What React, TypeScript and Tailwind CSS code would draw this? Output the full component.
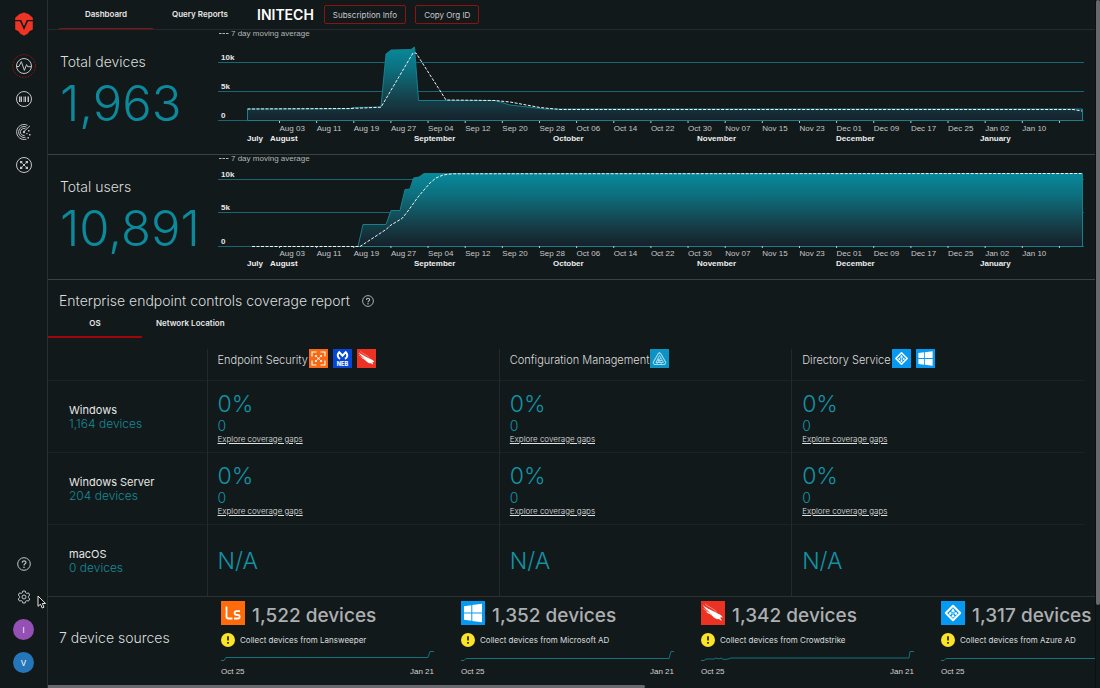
import React from "react";

type Point = [number, number];

const TICKS = [
  "Aug 03", "Aug 11", "Aug 19", "Aug 27", "Sep 04", "Sep 12", "Sep 20", "Sep 28",
  "Oct 06", "Oct 14", "Oct 22", "Oct 30", "Nov 07", "Nov 15", "Nov 23", "Dec 01",
  "Dec 09", "Dec 17", "Dec 25", "Jan 02", "Jan 10", "",
];

const MONTHS: [string, number][] = [
  ["July", 29], ["August", 52], ["September", 196], ["October", 335],
  ["November", 479], ["December", 618], ["January", 762],
];

const toPoints = (points: Point[]) => points.map((p) => p.join(",")).join(" ");

interface ChartProps {
  id: string;
  label: string;
  grid: [string, number][];
  area: Point[];
  average: Point[];
  top: number;
}

function Chart({ id, label, grid, area, average, top }: ChartProps) {
  return (
    <svg viewBox="0 0 877 124" className="block h-auto w-full min-w-0 flex-1 font-['Liberation_Sans',Arial,sans-serif]" role="img" aria-label={label}>
      <defs>
        <linearGradient id={id} gradientUnits="userSpaceOnUse" x1="0" x2="0" y1={top} y2="91">
          <stop offset="0" stopColor="#078a9c" />
          <stop offset="0.3" stopColor="#0d6f7e" />
          <stop offset="0.7" stopColor="#15404a" />
          <stop offset="1" stopColor="#16212a" />
        </linearGradient>
      </defs>
      {grid.map(([text, y]) => (
        <g key={text}>
          <line x1="0" x2="866" y1={y + 0.5} y2={y + 0.5} stroke="#196573" />
          <text x="3" y={y - 2} fontSize="8" fontWeight="700" fill="#e6e7e8">{text}</text>
        </g>
      ))}
      <polygon points={toPoints(area)} fill={`url(#${id})`} stroke="#16808d" />
      <polyline points={toPoints(average)} fill="none" stroke="#f1f1f1" strokeDasharray="3 1.5" />
      <path d="M1 3.5h2.5M4.5 3.5H7M8 3.5h2.5" stroke="#b4b6b8" />
      <text x="13" y="6" fontSize="8" fill="#b4b6b8">7 day moving average</text>
      {TICKS.map((text, i) => {
        const x = 61.5 + i * 37.14;
        return (
          <g key={i}>
            <line x1={x} x2={x} y1="91" y2="93" stroke="#c5c7c9" />
            <text x={x} y="101" fontSize="8" fill="#c5c7c9">{text}</text>
          </g>
        );
      })}
      {MONTHS.map(([text, x]) => (
        <text key={text} x={x} y="111" fontSize="8" fontWeight="700" fill="#ededee">{text}</text>
      ))}
    </svg>
  );
}

function MetricRow({ title, value, ...chart }: Omit<ChartProps, "label"> & { title: string; value: string }) {
  return (
    <section className="flex border-b border-[#3c4142]">
      <div className="w-[170px] shrink-0 pt-5 pl-3">
        <h2 className="text-[14px] leading-6 font-light text-[#dcddde]">{title}</h2>
        <p className="text-[49px] leading-[60px] font-light text-[#0c8a9c]">{value}</p>
      </div>
      <Chart label={`${title} over time`} {...chart} />
    </section>
  );
}

function BrandMark() {
  return (
    <svg viewBox="0 0 20 24" className="h-6 w-5" aria-hidden="true">
      <path d="M10 0.5 14.5 2 18.6 5.6 19 8H12.8L10 14.2 7.2 8H1L1.4 5.6 5.5 2Z" fill="#ee3424" />
      <path d="M1.2 9.3H6L10 18 14 9.3H18.8V17.5L15.2 19.5 14 21.5 10 23.8 6 21.5 4.8 19.5 1.2 17.5Z" fill="#ee3424" />
    </svg>
  );
}

const line = { fill: "none", stroke: "#c3c5c7", strokeWidth: 1 };

function PulseIcon() {
  return (
    <svg viewBox="0 0 24 24" className="size-6" aria-hidden="true">
      <circle cx="12" cy="12" r="11.4" fill="none" stroke="#8c1414" strokeDasharray="2 1" />
      <circle cx="12" cy="12" r="7.5" {...line} />
      <path d="M4.5 12.5H7L9.3 7.6 12.4 16.4 14.6 10.6 15.7 12.7H19.5" {...line} />
    </svg>
  );
}

function BarcodeIcon() {
  return (
    <svg viewBox="0 0 24 24" className="size-6" aria-hidden="true">
      <circle cx="12" cy="12" r="7.5" {...line} />
      <path d="M7.5 9.5v5.5M9.5 9.5v5.5M13.5 9.5v5.5M16.5 9.5v5.5" {...line} />
      <path d="M8.5 9.5v5.5M11.5 9.5v5.5M12.5 9.5v5.5M15.5 9.5v5.5" {...line} strokeOpacity="0.5" />
    </svg>
  );
}

function RadarIcon() {
  return (
    <svg viewBox="0 0 24 24" className="size-6" aria-hidden="true">
      <path d="M15.5 5.3A7.5 7.5 0 1 0 14.5 19.1" {...line} />
      <path d="M14.6 7.1A5.5 5.5 0 1 0 13.5 17.3" {...line} />
      <path d="M13.5 8.9A3.5 3.5 0 1 0 12.6 15.4" {...line} />
      <path d="M11.5 12 18 5.8" {...line} />
      <circle cx="12" cy="12" r="1.2" fill="#c3c5c7" />
      <path d="M16 10h1.5v1.5H16ZM14.3 13h1.2v1.2h-1.2ZM17 14h1.5v1.5H17ZM15.5 17H17v1.5h-1.5Z" fill="#c3c5c7" />
    </svg>
  );
}

function NodesIcon() {
  return (
    <svg viewBox="0 0 24 24" className="size-6" aria-hidden="true">
      <circle cx="12" cy="12" r="7.5" {...line} />
      <path d="M8.5 8.5 15.5 15.5M15.5 8.5 8.5 15.5" {...line} strokeOpacity="0.6" />
      <path d="M8 8h2.300v2.300H8ZM13.700 8H16v2.300h-2.300ZM8 13.700h2.300V16H8ZM13.700 13.700H16V16h-2.300ZM11 11h2v2h-2Z" fill="#c3c5c7" />
    </svg>
  );
}

function HelpIcon({ className }: { className: string }) {
  return (
    <svg viewBox="0 0 14 14" className={className} aria-hidden="true">
      <circle cx="7" cy="7" r="6.3" {...line} />
      <path d="M5.2 5.7C5.2 3.2 8.9 3.3 8.9 5.5 8.9 6.9 7 6.8 7 8.5" {...line} strokeWidth="1.2" />
      <circle cx="7" cy="10.2" r="0.8" fill="#c3c5c7" />
    </svg>
  );
}

function GearIcon() {
  return (
    <svg viewBox="0 0 14 14" className="size-[14px]" aria-hidden="true">
      <path d="M5.8 1h2.4l.4 1.7 1.2.7 1.7-.5 1.2 2.1-1.2 1.3v1.4l1.2 1.3-1.2 2.1-1.7-.5-1.2.7-.4 1.7H5.8l-.4-1.7-1.2-.7-1.7.5L1.3 9l1.2-1.3V6.3L1.3 5l1.2-2.1 1.7.5 1.2-.7Z" {...line} strokeLinejoin="round" />
      <circle cx="7" cy="7" r="2" {...line} />
    </svg>
  );
}

type Logo = "scan" | "neb" | "falcon" | "triangle" | "azure" | "windows" | "ls";

const LOGO_NAMES: Record<Logo, string> = {
  scan: "Endpoint scanner",
  neb: "Malwarebytes Nebula",
  falcon: "Crowdstrike",
  triangle: "Configuration manager",
  azure: "Azure AD",
  windows: "Microsoft AD",
  ls: "Lansweeper",
};

function VendorLogo({ logo, className }: { logo: Logo; className: string }) {
  return (
    <svg viewBox="0 0 24 24" className={className} role="img" aria-label={LOGO_NAMES[logo]}>
      {logo === "scan" && (
        <>
          <path d="M0 0h24v24H0Z" fill="#fb6a12" />
          <path d="M9.500 3.800H3.800v5.700M14.500 3.800h5.700v5.700M9.500 20.200H3.800v-5.700M14.500 20.200h5.700v-5.700" fill="none" stroke="#fff" strokeWidth="1.4" />
          <path d="M8.5 8.5l7 7M15.5 8.5l-7 7" stroke="#fff" strokeWidth="1" />
          <path d="M7.500 7.500h2.200v2.200H7.500ZM14.300 7.500h2.200v2.200h-2.200ZM7.500 14.300h2.200v2.200H7.500ZM14.300 14.300h2.200v2.200h-2.200ZM11 11h2v2h-2Z" fill="#fff" />
        </>
      )}
      {logo === "neb" && (
        <>
          <path d="M0 0h24v24H0Z" fill="#0647d6" />
          <path d="M9 12.400C5.200 11 5.200 6.200 7.800 4L12 8.600 16.200 4C18.800 6.200 18.800 11 15 12.400" fill="none" stroke="#fff" strokeWidth="2.600" strokeLinejoin="miter" />
          <text x="12" y="22" textAnchor="middle" fontSize="7" fontWeight="800" fill="#fff">NEB</text>
        </>
      )}
      {logo === "falcon" && (
        <>
          <path d="M0 0h24v24H0Z" fill="#ec3323" />
          <path d="M2 4C6 8 12 9.5 15.5 12 18 13 20 13.5 22 16.5 20.5 16 19.5 16.5 19 17 20 17.5 20.5 18.5 20.5 20 19 18 17.5 18.3 16 18 13 17.5 12 15 9.5 13.5 8 12.6 6 12 5 10.5 6.5 11 8 11 9 11.5 7 9.5 3.5 8 2 4Z" fill="#fff" />
          <path d="M4 3C8 6.5 13 7.5 16 11.5M2.5 7.5C5 10.5 9 11 11 14" fill="none" stroke="#f6b9a9" strokeWidth="0.7" />
        </>
      )}
      {logo === "triangle" && (
        <>
          <path d="M0 0h24v24H0Z" fill="#0b93c4" />
          <path d="M12 4.5 14 6.5 20 17 18.5 19.5H5.5L4 17 10 6.5Z" fill="none" stroke="#a5dcee" strokeWidth="1.3" />
          <path d="M12 8 17 17H7.5L12 8M10 12 14.5 19M13.5 11 8.5 19M9 14.5h6" fill="none" stroke="#a5dcee" strokeWidth="1.2" />
        </>
      )}
      {logo === "azure" && (
        <>
          <path d="M0 0h24v24H0Z" fill="#0699f2" />
          <path d="M12 4.8 19.2 12 12 19.2 4.8 12Z" fill="none" stroke="#fff" strokeWidth="2" strokeLinejoin="round" />
          <path d="M12 7.5V16M12 9 9 12.5M12 9l3 3.5" stroke="#d8efff" strokeWidth="0.9" />
          <circle cx="12" cy="9.5" r="1.3" fill="#fff" />
          <circle cx="9.2" cy="12.6" r="1.3" fill="#fff" />
          <circle cx="14.8" cy="12.6" r="1.3" fill="#fff" />
          <circle cx="12" cy="15.2" r="1.3" fill="#fff" />
        </>
      )}
      {logo === "windows" && (
        <>
          <path d="M0 0h24v24H0Z" fill="#0699f2" />
          <path d="M3 5.2 10.3 4.2V11.4H3ZM11.3 4 21 2.7V11.4H11.3ZM3 12.5H10.3V19.8L3 18.8ZM11.3 12.5H21V21.3L11.3 20Z" fill="#fff" />
        </>
      )}
      {logo === "ls" && (
        <>
          <path d="M0 0h24v24H0Z" fill="#ff6a0a" />
          <path d="M5.5 5.5V15.5Q5.5 17.5 7.5 17.5H11.5M19 10.2H15.5C13 10.2 13 13.6 15.5 13.8H16.8C19.3 14 19.3 17.5 16.8 17.5H13" fill="none" stroke="#fff" strokeWidth="1.8" />
        </>
      )}
    </svg>
  );
}

const COVERAGE_COLUMNS: { name: string; logos: Logo[] }[] = [
  { name: "Endpoint Security", logos: ["scan", "neb", "falcon"] },
  { name: "Configuration Management", logos: ["triangle"] },
  { name: "Directory Service", logos: ["azure", "windows"] },
];

const COVERAGE_ROWS = [
  { os: "Windows", devices: "1,164 devices", covered: true },
  { os: "Windows Server", devices: "204 devices", covered: true },
  { os: "macOS", devices: "0 devices", covered: false },
];

const SOURCES: { logo: Logo; count: string; source: string; trend: string }[] = [
  { logo: "ls", count: "1,522", source: "Lansweeper", trend: "0,10.5 3,10.5 5,7.5 207,7.5 209,1.5 213,1.5" },
  { logo: "windows", count: "1,352", source: "Microsoft AD", trend: "0,10.5 3,10.5 5,8.5 208,8.5 210,1.5 213,1.5" },
  { logo: "falcon", count: "1,342", source: "Crowdstrike", trend: "0,10.5 3,10.5 5,9 13,9 15,8 18,9 20,8 23,9.5 27,9 30,8 208,8 209,1.5 213,1.5" },
  { logo: "azure", count: "1,317", source: "Azure AD", trend: "0,10.5 3,10.5 5,8.5 208,8.5 210,1.5 213,1.5" },
];

function Sidebar() {
  return (
    <nav aria-label="Main" className="sticky top-0 flex h-screen w-12 shrink-0 flex-col items-center justify-between border-r border-[#2b3031] pb-[9px]">
      <div className="flex flex-col items-center">
        <a href="#home" aria-label="Home" className="flex h-[49px] items-start pt-3"><BrandMark /></a>
        <a href="#activity" aria-label="Activity" className="flex h-[33px] items-center"><PulseIcon /></a>
        <a href="#devices" aria-label="Devices" className="flex h-[33px] items-center"><BarcodeIcon /></a>
        <a href="#discovery" aria-label="Discovery" className="flex h-[33px] items-center"><RadarIcon /></a>
        <a href="#network" aria-label="Network" className="flex h-[33px] items-center"><NodesIcon /></a>
      </div>
      <div className="flex flex-col items-center">
        <button aria-label="Help" className="flex h-[33px] items-center"><HelpIcon className="size-[14px]" /></button>
        <button aria-label="Settings" className="flex h-[33px] items-center"><GearIcon /></button>
        <div className="flex h-[33px] items-center">
          <button className="size-[21px] rounded-full bg-[#9450b4] text-[8px] text-white">I</button>
        </div>
        <div className="flex h-[33px] items-center">
          <button className="size-[21px] rounded-full bg-[#2576b8] text-[8px] text-white">V</button>
        </div>
      </div>
    </nav>
  );
}

function CoverageTable() {
  return (
    <table className="mt-[11px] w-full table-fixed border-collapse text-left">
      <thead>
        <tr className="h-[31px] align-top">
          <td className="w-[159px]" />
          {COVERAGE_COLUMNS.map((column) => (
            <th key={column.name} scope="col" className="border-l border-[#24292a] p-0 pl-[10px] font-normal">
              <div className="flex items-start gap-[5px]">
                <span className="-mr-1 pt-px text-[11px] leading-5 font-light text-[#dcddde]">{column.name}</span>
                {column.logos.map((logo) => (
                  <VendorLogo key={logo} logo={logo} className="size-[19px]" />
                ))}
              </div>
            </th>
          ))}
        </tr>
      </thead>
      <tbody>
        {COVERAGE_ROWS.map((row) => (
          <tr key={row.os} className="h-[72px] border-t border-[#1d2324]">
            <th scope="row" className="p-0 pt-0.5 pl-[21px] font-normal">
              <div className="text-[11px] leading-[14px] text-[#e6e7e8]">{row.os}</div>
              <div className="text-[12px] leading-[14px] font-light text-[#178a99]">{row.devices}</div>
            </th>
            {COVERAGE_COLUMNS.map((column) => (
              <td key={column.name} className="border-l border-[#24292a] p-0 pt-0.5 pl-[10px] font-light text-[#1492a4]">
                <div className="text-[23px] leading-7">{row.covered ? "0%" : "N/A"}</div>
                {row.covered && (
                  <>
                    <div className="text-[14px] leading-4">0</div>
                    <a href="#gaps" className="block text-[8px] leading-[11px] text-[#e0e1e2] underline">Explore coverage gaps</a>
                  </>
                )}
              </td>
            ))}
          </tr>
        ))}
      </tbody>
    </table>
  );
}

function SourceCard({ logo, count, source, trend }: (typeof SOURCES)[number]) {
  return (
    <article className="w-[213px] shrink-0">
      <div className="flex items-start gap-[7px]">
        <VendorLogo logo={logo} className="size-6" />
        <h3 className="pt-px text-[19px] leading-7 font-medium whitespace-nowrap text-[#adafb1]">{count} devices</h3>
      </div>
      <div className="mt-[3px] flex items-center gap-[5px]">
        <svg viewBox="0 0 14 14" className="size-[14px]" role="img" aria-label="Warning">
          <circle cx="7" cy="7" r="7" fill="#fbe428" />
          <path d="M7 3.2v4.3M7 9v1.7" stroke="#20230f" strokeWidth="1.7" />
        </svg>
        <p className="text-[8px] leading-[14px] text-[#dcddde]">Collect devices from {source}</p>
      </div>
      <svg viewBox="0 0 213 12" className="mt-[3px] block w-full" role="img" aria-label={`${source} trend`}>
        <polyline points={trend} fill="none" stroke="#14727e" />
      </svg>
      <div className="mt-[5px] flex justify-between font-['Liberation_Sans',Arial,sans-serif] text-[8px] leading-[10px] text-[#d2d3d4]">
        <span>Oct 25</span>
        <span>Jan 21</span>
      </div>
    </article>
  );
}

export default function App() {
  return (
    <div className="flex min-h-screen bg-[#12191a] font-['Inter','Noto_Sans',sans-serif] text-[#e6e7e8]">
      <Sidebar />
      <div className="flex min-w-0 flex-1 flex-col">
        <header className="flex h-[30px] items-center border-b border-[#252b2c] pl-[11px]">
          <nav aria-label="Views" className="flex h-full text-[8px] font-semibold">
            <a href="#dashboard" aria-current="page" className="flex w-[94px] items-center justify-center border-b border-[#8f0f12]">Dashboard</a>
            <a href="#reports" className="flex w-[94px] items-center justify-center border-b border-transparent">Query Reports</a>
          </nav>
          <h1 className="ml-[10px] text-[14px] font-semibold text-white">INITECH</h1>
          <button className="ml-[10px] h-[19px] rounded-xs border border-[#8f1212] px-2 text-[8px] text-[#c9cacc]">Subscription Info</button>
          <button className="ml-[9px] h-[19px] rounded-xs border border-[#8f1212] px-2 text-[8px] text-[#c9cacc]">Copy Org ID</button>
        </header>

        <MetricRow
          id="devices-fill"
          title="Total devices"
          value="1,963"
          top={17}
          grid={[["10k", 32], ["5k", 61], ["0", 90]]}
          area={[[29.5, 90.5], [29.5, 79], [132, 78.8], [135, 77.5], [163, 77], [168, 24], [173, 20], [193, 19.5], [196.5, 17], [200.5, 70.5], [277, 70.5], [292, 75], [327, 79], [864.5, 79], [864.5, 90.5]]}
          average={[[29.5, 79], [132, 78.5], [163, 77.2], [195, 23], [198, 23], [228, 70], [277, 70.5], [292, 72], [322, 77.5], [342, 79.5], [855, 79.5], [864, 81]]}
        />
        <MetricRow
          id="users-fill"
          title="Total users"
          value="10,891"
          top={18}
          grid={[["10k", 24], ["5k", 57], ["0", 91]]}
          area={[[140, 91.5], [145, 69.5], [168, 69.5], [173, 55.5], [182, 55.5], [187, 34.5], [192, 34], [195.5, 23], [201, 22], [206, 18.5], [864.5, 18.5], [864.5, 91.5]]}
          average={[[34, 91.5], [142, 91.5], [168, 74.5], [173, 70], [184, 63.5], [190, 56], [200, 42], [212, 28], [218, 23], [225, 20], [234, 18.8], [864, 18.5]]}
        />

        <section className="pr-[11px]">
          <div className="flex items-center gap-3 pt-[9px] pl-[11px]">
            <h2 className="text-[14px] leading-6 font-light text-[#dcddde]">Enterprise endpoint controls coverage report</h2>
            <button aria-label="About this report"><HelpIcon className="size-3" /></button>
          </div>
          <div role="tablist" className="flex text-[8px] leading-[10px] font-semibold">
            <button role="tab" aria-selected="true" className="w-[94px] border-b-2 border-[#a00508] pt-[5px] pb-2">OS</button>
            <button role="tab" aria-selected="false" className="border-b-2 border-transparent px-[14px] pt-[5px] pb-2">Network Location</button>
          </div>
          <CoverageTable />
        </section>

        <section className="flex flex-1 items-start overflow-hidden border-t border-[#2b3031]">
          <h2 className="w-[173px] shrink-0 pt-[29px] pl-[11px] text-[14px] leading-6 font-light text-[#dcddde]">7 device sources</h2>
          <div className="flex gap-[27px] pt-1">
            {SOURCES.map((source) => (
              <SourceCard key={source.source} {...source} />
            ))}
          </div>
        </section>
        <div className="h-[3px]">
          <div className="h-full w-[57%] rounded-r-full bg-[#68686f]" />
        </div>
      </div>
      <div className="sticky top-0 h-screen w-[5px] shrink-0 border-l border-[#0b1011]">
        <div className="h-[88%] rounded-full bg-[#68686c]" />
      </div>
      <svg viewBox="0 0 10 14" className="pointer-events-none fixed bottom-[79px] left-[37px] h-[14px] w-[10px]" aria-hidden="true">
        <path d="M1 1V11.3L3.5 9.2 5.2 13 7 12.2 5.3 8.5H8.6Z" fill="#0a0a0a" stroke="#e8e8e8" />
      </svg>
    </div>
  );
}
